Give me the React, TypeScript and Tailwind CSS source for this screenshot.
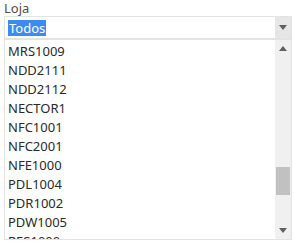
const items = [
  'MRS1009',
  'NDD2111',
  'NDD2112',
  'NECTOR1',
  'NFC1001',
  'NFC2001',
  'NFE1000',
  'PDL1004',
  'PDR1002',
  'PDW1005',
  'RES1000',
]

const Tri = ({ up }: { up?: boolean }) => (
  <svg width="8" height="5" viewBox="0 0 8 5" className="block">
    <path d={up ? 'M0 5 L4 0 L8 5 Z' : 'M0 0 L8 0 L4 5 Z'} fill="#5f5f5f" />
  </svg>
)

export default function App() {
  return (
    <div className="h-[241px] w-[294px] overflow-hidden bg-white pl-[4px] pr-[2px] font-['Noto_Sans',sans-serif]">
      <div className="h-[16px] text-[13px] leading-[17px] text-[#5b4a42]">Loja</div>

      <div className="flex h-[23px] border border-[#e3e3e3] bg-white">
        <div className="flex flex-1 items-center pl-[3px]">
          <span className="bg-[#3c8cf0] px-px text-[13px] leading-[16px] text-white">Todos</span>
        </div>
        <div className="flex w-[16px] items-center justify-center bg-[#e6e6e6]">
          <Tri />
        </div>
      </div>

      <div className="flex h-[201px] border border-[#e3e3e3]">
        <ul className="flex-1 overflow-hidden pl-[3px] pt-[2px]">
          {items.map((it) => (
            <li key={it} className="h-[19px] text-[13px] leading-[19px] text-[#2a2a2a]">
              {it}
            </li>
          ))}
        </ul>
        <div className="flex w-[16px] flex-col items-center bg-[#f0f0f0]">
          <div className="flex h-[17px] items-center justify-center">
            <Tri up />
          </div>
          <div className="w-full flex-1 px-[1px] pt-[110px]">
            <div className="h-[28px] bg-[#c1c1c1]" />
          </div>
          <div className="flex h-[17px] items-center justify-center">
            <Tri />
          </div>
        </div>
      </div>
    </div>
  )
}
